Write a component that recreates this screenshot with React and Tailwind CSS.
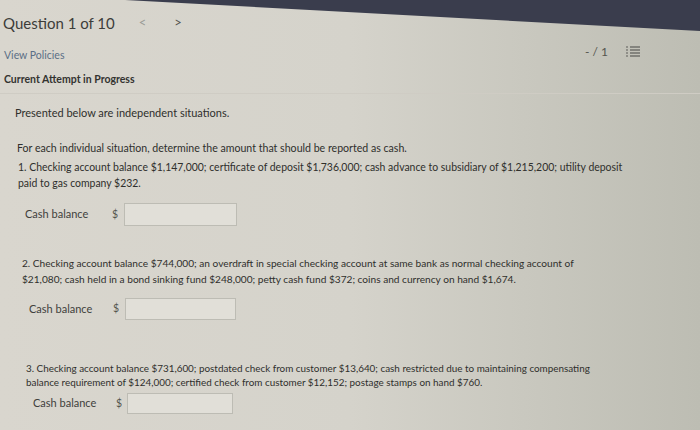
import React from 'react';

const QUESTIONS = [
    {
        lines: [
            '1. Checking account balance $1,147,000; certificate of deposit $1,736,000; cash advance to subsidiary of $1,215,200; utility deposit',
            'paid to gas company $232.',
        ],
        text: 'pl-[18px] pt-[2px] text-[10.45px] leading-[16px]',
        row: 'pl-[25px] pt-[12px]',
        label: 'w-[87px]',
        dollar: 'w-[12px]',
        input: 'w-[113px] h-[23px]',
    },
    {
        lines: [
            '2. Checking account balance $744,000; an overdraft in special checking account at same bank as normal checking account of',
            '$21,080; cash held in a bond sinking fund $248,000; petty cash fund $372; coins and currency on hand $1,674.',
        ],
        text: 'pl-[22px] pt-[29px] text-[10.15px] leading-[16px]',
        row: 'pl-[29px] pt-[11px]',
        label: 'w-[84px]',
        dollar: 'w-[12px]',
        input: 'w-[111px] h-[22px]',
    },
    {
        lines: [
            '3. Checking account balance $731,600; postdated check from customer $13,640; cash restricted due to maintaining compensating',
            'balance requirement of $124,000; certified check from customer $12,152; postage stamps on hand $760.',
        ],
        text: 'pl-[26px] pt-[41px] text-[9.9px] leading-[14px]',
        row: 'pl-[33px] pt-[4px]',
        label: 'w-[83px]',
        dollar: 'w-[11px]',
        input: 'w-[106px] h-[21px]',
    },
];

function CashRow({ q }) {
    return (
        <div className={`flex items-center ${q.row}`}>
            <span className={`${q.label} text-[11px] text-[#3f3f3c]`}>Cash balance</span>
            <span className={`${q.dollar} text-[10.5px] text-[#55554f]`}>$</span>
            <div className={`${q.input} border border-[#bdbcb4] bg-[#e1dfd8]`} />
        </div>
    );
}

export default function App() {
    return (
        <div className="relative w-[700px] h-[430px] overflow-hidden bg-linear-to-r from-[#d9d6ce] via-[#d5d3cb] to-[#bdbdb3] font-['Lato',sans-serif] text-[#2f2f2c]">
            {/* dark edge of the screen bezel */}
            <svg className="absolute top-0 left-0" width="700" height="40" viewBox="0 0 700 40">
                <polygon points="125,0 700,0 700,31" fill="#3a3d4d" />
            </svg>

            <div className="relative flex flex-col">
                <div className="flex items-center h-[40px] pl-[3px] pt-[6px]">
                    <span className="text-[15px] text-[#3d3d3a]">Question 1 of 10</span>
                    <span className="ml-[24px] text-[13px] text-[#9a9a94]">&lt;</span>
                    <span className="ml-[28px] text-[13px] text-[#55554f]">&gt;</span>
                </div>

                <div className="flex items-center justify-between h-[24px]">
                    <span className="pl-[4px] pt-[8px] text-[10.5px] text-[#5b6f86]">View Policies</span>
                    <div className="flex items-center pr-[60px] gap-[18px] text-[#55554f]">
                        <span className="text-[12px]">- / 1</span>
                        <svg width="14" height="12" viewBox="0 0 14 12">
                            <g stroke="#5c5c58" strokeWidth="1.2">
                                <line x1="0" y1="1" x2="2" y2="1" />
                                <line x1="0" y1="4" x2="2" y2="4" />
                                <line x1="0" y1="7" x2="2" y2="7" />
                                <line x1="0" y1="10" x2="2" y2="10" />
                                <line x1="4" y1="1" x2="14" y2="1" />
                                <line x1="4" y1="4" x2="14" y2="4" />
                                <line x1="4" y1="7" x2="14" y2="7" />
                                <line x1="4" y1="10" x2="14" y2="10" />
                            </g>
                        </svg>
                    </div>
                </div>

                <div className="pl-[4px] pt-[8px] pb-[5px] border-b border-[#cfccc4] text-[10.5px] font-bold text-[#333330]">
                    Current Attempt in Progress
                </div>

                <div className="flex flex-col pt-[11px] text-[10.6px]">
                    <p className="pl-[15px] text-[11px]">Presented below are independent situations.</p>
                    <p className="pl-[17px] pt-[20px]">For each individual situation, determine the amount that should be reported as cash.</p>

                    {QUESTIONS.map((q, i) => (
                        <div key={i} className="flex flex-col">
                            <div className={`${q.text} whitespace-nowrap`}>
                                {q.lines.map((line, j) => (
                                    <p key={j}>{line}</p>
                                ))}
                            </div>
                            <CashRow q={q} />
                        </div>
                    ))}
                </div>
            </div>
        </div>
    );
}
